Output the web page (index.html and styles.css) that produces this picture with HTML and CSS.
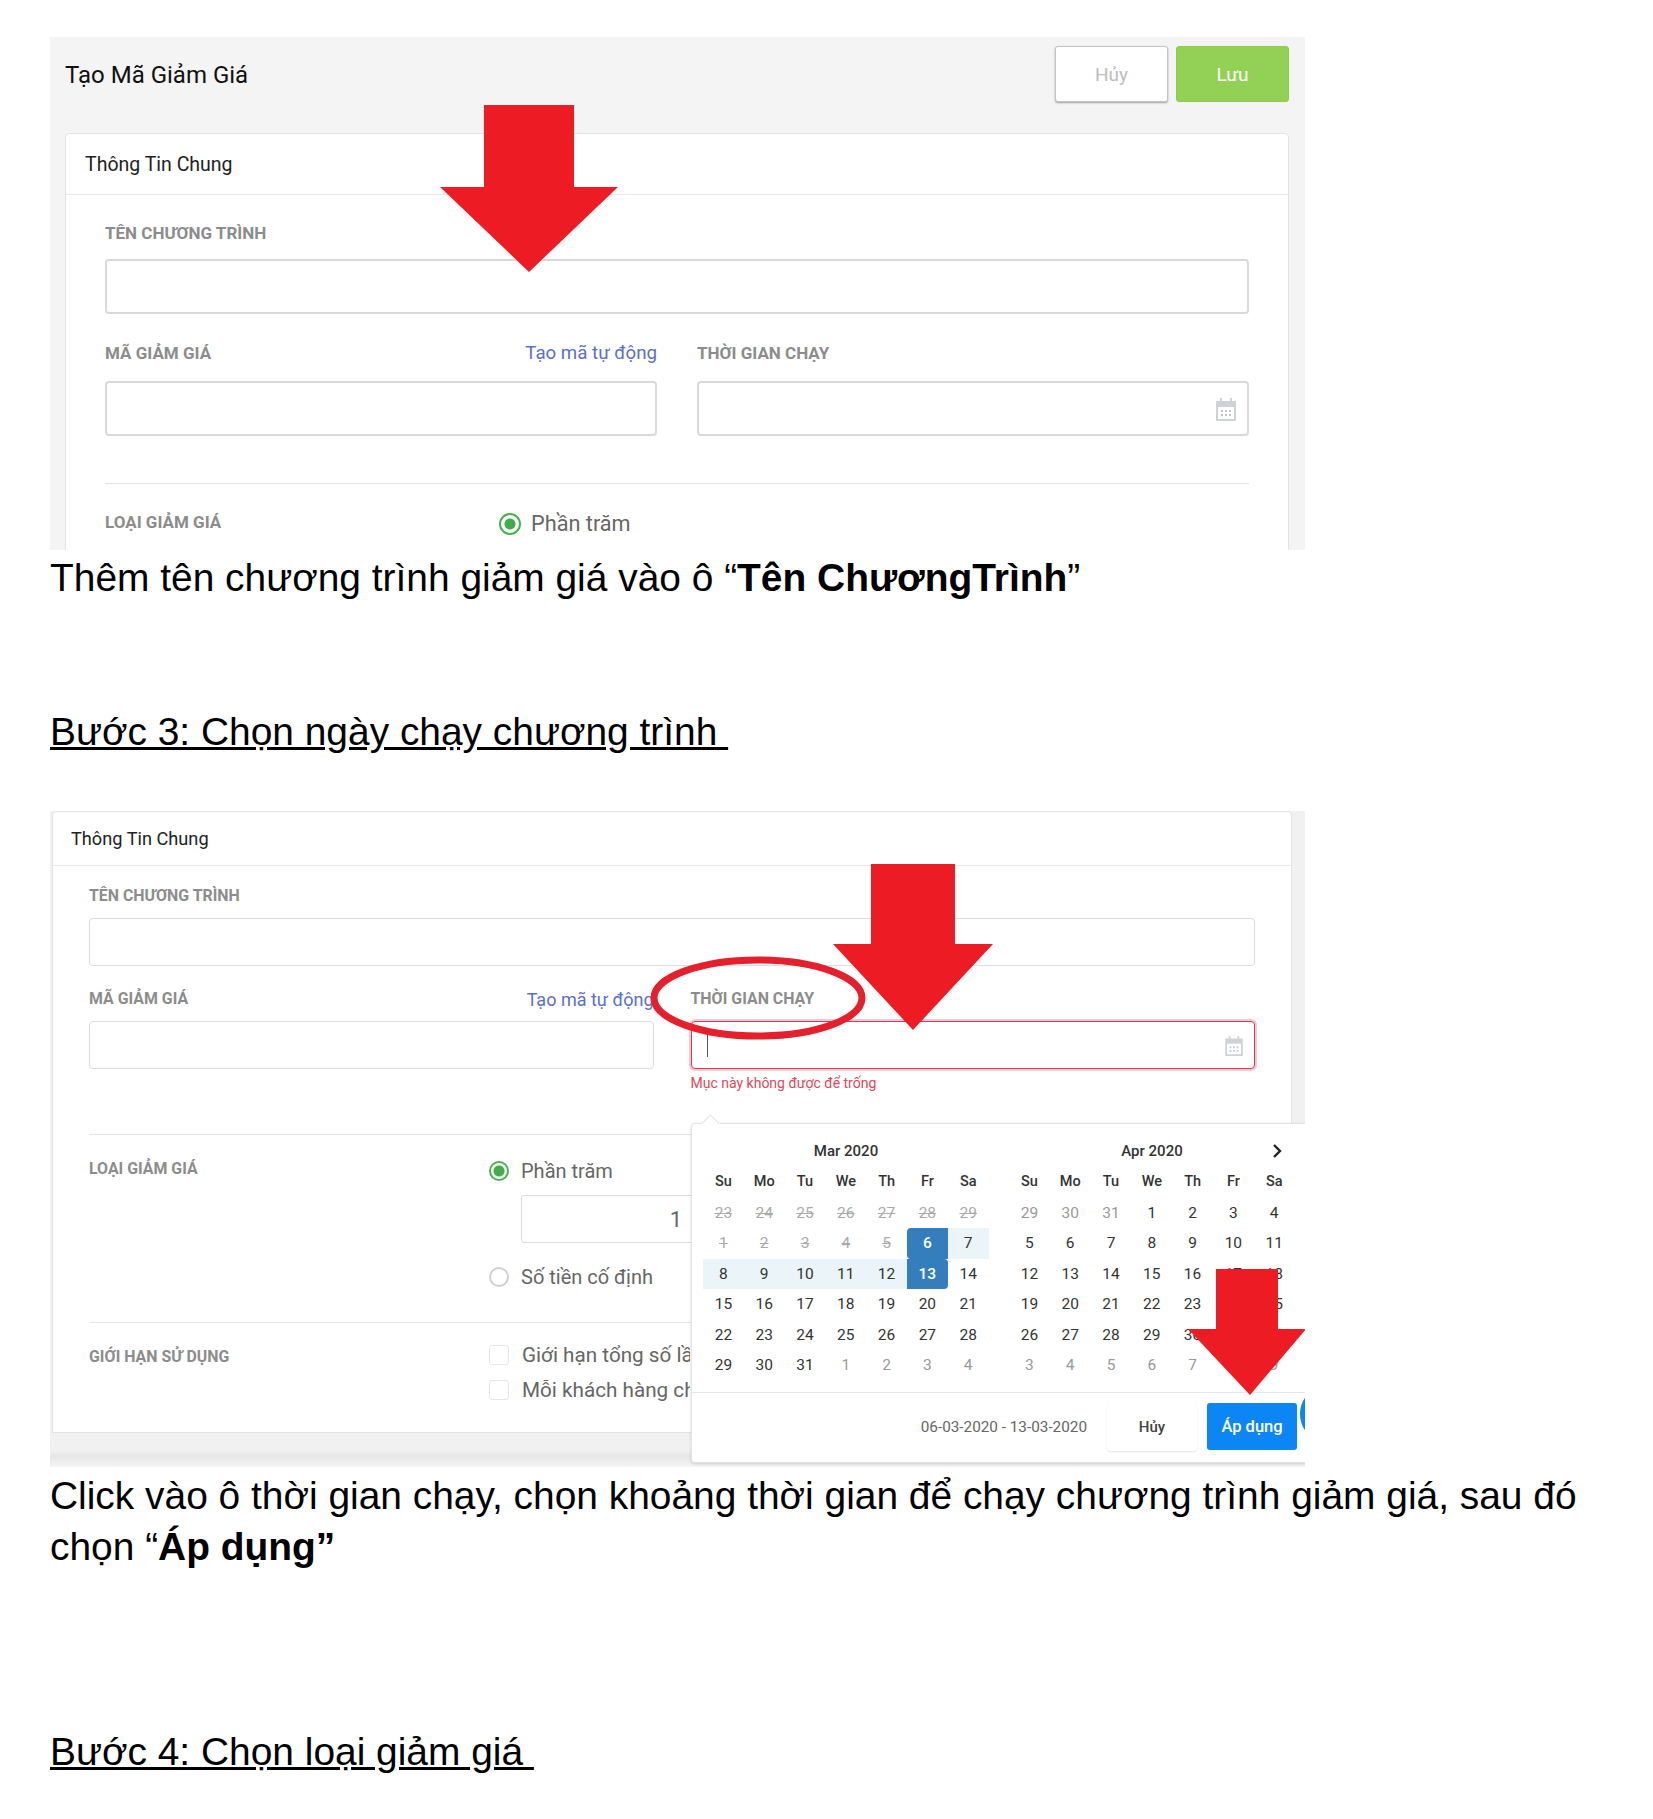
FILE: index.html
```html
<!DOCTYPE html>
<html lang="vi">
<head>
    <meta charset="UTF-8">
    <title>Tạo Mã Giảm Giá</title>
    <link rel="stylesheet" href="styles.css">
</head>
<body>
    <div class="shot shot-one">
        <div class="page-head">
            <h1>Tạo Mã Giảm Giá</h1>
            <div class="head-btns">
                <button class="btn-cancel">Hủy</button>
                <button class="btn-save">Lưu</button>
            </div>
        </div>
        <div class="card">
            <div class="card-title">Thông Tin Chung</div>
            <div class="card-body">
                <div class="lbl">TÊN CHƯƠNG TRÌNH</div>
                <div class="field"></div>
                <div class="two-col">
                    <div>
                        <div class="lbl-row">
                            <div class="lbl">MÃ GIẢM GIÁ</div>
                            <a class="auto-link">Tạo mã tự động</a>
                        </div>
                        <div class="field"></div>
                    </div>
                    <div>
                        <div class="lbl-row">
                            <div class="lbl">THỜI GIAN CHẠY</div>
                        </div>
                        <div class="field field-date">
                            <svg class="cal-icon" width="20" height="24" viewBox="0 0 20 24"><path d="M1 5h18v18H1z" fill="none" stroke="#cfd3d8" stroke-width="2"/><path d="M1 5h18v5H1z" fill="#cfd3d8"/><path d="M5 1v5M15 1v5" stroke="#cfd3d8" stroke-width="2"/><path d="M5 13h2v2H5zM9 13h2v2H9zM13 13h2v2h-2zM5 17h2v2H5zM9 17h2v2H9zM13 17h2v2h-2z" fill="#bfc4ca"/></svg>
                        </div>
                    </div>
                </div>
                <hr class="sep">
                <div class="type-row">
                    <div class="lbl">LOẠI GIẢM GIÁ</div>
                    <div class="radio-item"><span class="radio radio-on"></span>Phần trăm</div>
                </div>
            </div>
        </div>
        <svg class="arrow arrow-one" viewBox="0 0 178 167"><path d="M44 0h90v82h44L89 167 0 82h44z" fill="#ed1c24"/></svg>
    </div>

    <p class="doc-text">Thêm tên chương trình giảm giá vào ô “<b>Tên ChươngTrình</b>”</p>
    <h2 class="doc-step step-three">Bước 3: Chọn ngày chạy chương trình </h2>

    <div class="shot shot-two">
        <div class="card card-two">
            <div class="card-title">Thông Tin Chung</div>
            <div class="card-body">
                <div class="lbl">TÊN CHƯƠNG TRÌNH</div>
                <div class="field"></div>
                <div class="two-col">
                    <div>
                        <div class="lbl-row">
                            <div class="lbl">MÃ GIẢM GIÁ</div>
                            <a class="auto-link">Tạo mã tự động</a>
                        </div>
                        <div class="field"></div>
                    </div>
                    <div>
                        <div class="lbl-row">
                            <div class="lbl">THỜI GIAN CHẠY</div>
                        </div>
                        <div class="field field-date field-error">
                            <span class="caret"></span>
                            <svg class="cal-icon" width="18" height="21" viewBox="0 0 20 24"><path d="M1 5h18v18H1z" fill="none" stroke="#cfd3d8" stroke-width="2"/><path d="M1 5h18v5H1z" fill="#cfd3d8"/><path d="M5 1v5M15 1v5" stroke="#cfd3d8" stroke-width="2"/><path d="M5 13h2v2H5zM9 13h2v2H9zM13 13h2v2h-2zM5 17h2v2H5zM9 17h2v2H9zM13 17h2v2h-2z" fill="#bfc4ca"/></svg>
                        </div>
                        <div class="err-msg">Mục này không được để trống</div>
                    </div>
                </div>
                <hr class="sep sep-two">
                <div class="type-grid">
                    <div class="lbl">LOẠI GIẢM GIÁ</div>
                    <div class="type-opts">
                        <div class="radio-item"><span class="radio radio-on"></span>Phần trăm</div>
                        <div class="num-input">1</div>
                        <div class="radio-item"><span class="radio"></span>Số tiền cố định</div>
                    </div>
                </div>
                <hr class="sep sep-three">
                <div class="type-grid">
                    <div class="lbl">GIỚI HẠN SỬ DỤNG</div>
                    <div class="type-opts limit-opts">
                        <div class="check-item"><span class="check"></span>Giới hạn tổng số lần sử dụng</div>
                        <div class="check-item"><span class="check"></span>Mỗi khách hàng chỉ được dùng</div>
                    </div>
                </div>
            </div>
        </div>

        <div class="picker">
            <div class="months">
                <div class="month">
                    <div class="month-name">Mar 2020</div>
                    <div class="cal" id="cal-mar"></div>
                </div>
                <div class="month">
                    <div class="month-name">Apr 2020</div>
                    <div class="cal" id="cal-apr"></div>
                </div>
            </div>
            <div class="picker-foot">
                <span class="range">06-03-2020 - 13-03-2020</span>
                <button class="pick-cancel">Hủy</button>
                <button class="pick-apply">Áp dụng</button>
            </div>
        </div>
        <svg class="next-icon" width="10" height="14" viewBox="0 0 10 14"><path d="M2 1l6 6-6 6" fill="none" stroke="#222" stroke-width="2.400"/></svg>

        <svg class="ring" viewBox="0 0 216 84"><ellipse cx="108" cy="42" rx="104" ry="38" fill="none" stroke="#e3202b" stroke-width="7"/></svg>
        <svg class="arrow arrow-two" viewBox="0 0 160 166"><path d="M38 0h84v80h38l-80 86L0 80h38z" fill="#ed1c24"/></svg>
        <svg class="arrow arrow-three" viewBox="0 0 118 126"><path d="M28 0h62v60h28l-56 66L0 60h28z" fill="#ed1c24"/></svg>
        <span class="chat-dot"></span>
    </div>

    <p class="doc-text text-two">Click vào ô thời gian chạy, chọn khoảng thời gian để chạy chương trình giảm giá, sau đó chọn “<b>Áp dụng”</b></p>
    <h2 class="doc-step step-four">Bước 4: Chọn loại giảm giá </h2>

    <script src="calendar.js"></script>
</body>
</html>
```

FILE: styles.css
```css
body {
    font-family: "Liberation Sans", Arial, sans-serif;
    background-color: #fff;
    color: #000;
    margin: 0;
    padding: 37px 50px 0;
}

/* screenshots pasted in the doc */
.shot {
    position: relative;
    width: 1255px;
    overflow: hidden;
    font-family: Roboto, sans-serif;
}

.shot-one {
    height: 513px;
    background-color: #f4f4f4;
}

.page-head {
    display: flex;
    justify-content: space-between;
    align-items: center;
    padding: 9px 16px 0 15px;
    height: 56px;
}

.page-head h1 {
    margin: 2px 0 0;
    font-size: 24px;
    font-weight: 400;
    color: #111;
}

.head-btns {
    display: flex;
    gap: 8px;
}

.head-btns button {
    width: 113px;
    height: 56px;
    font-family: Roboto, sans-serif;
    font-size: 19px;
    border-radius: 3px;
}

.btn-cancel {
    background-color: #fff;
    border: 1px solid #c4c4c4;
    color: #bdbdbd;
    box-shadow: 0 1px 2px rgba(0, 0, 0, 0.35);
}

.btn-save {
    background-color: #92d155;
    border: 1px solid #8ccb4b;
    color: #fff;
}

.card {
    background-color: #fff;
    border: 1px solid #e3e3e3;
    border-radius: 4px 4px 0 0;
    margin: 31px 16px 0 15px;
    height: 500px;
}

.card-title {
    height: 60px;
    display: flex;
    align-items: center;
    padding-left: 19px;
    font-size: 19.500px;
    color: #222;
    border-bottom: 1px solid #e8e8e8;
}

.card-body {
    padding: 28px 39px 0;
}

.lbl {
    font-size: 17px;
    line-height: 20px;
    font-weight: 700;
    color: #8c8c8c;
}

.field {
    height: 51px;
    margin-top: 16px;
    background-color: #fff;
    border: 2px solid #d9d9d9;
    border-radius: 4px;
}

.two-col {
    display: grid;
    grid-template-columns: 1fr 1fr;
    gap: 40px;
    margin-top: 27px;
}

.lbl-row {
    display: flex;
    justify-content: space-between;
    align-items: center;
    height: 24px;
    white-space: nowrap;
}

.auto-link {
    font-size: 18.700px;
    color: #5b6fc9;
}

.field-date {
    position: relative;
    display: flex;
    align-items: center;
    justify-content: flex-end;
    padding-right: 11px;
}

.sep {
    border: 0;
    border-top: 1px solid #e5e5e5;
    margin: 47px 0 0;
}

.type-row {
    display: flex;
    align-items: center;
    margin-top: 27px;
}

.type-row .lbl {
    width: 394px;
    margin-bottom: 3px;
}

.radio-item {
    display: flex;
    align-items: center;
    font-size: 21.700px;
    color: #666;
}

.radio {
    width: 18px;
    height: 18px;
    border: 2px solid #d0d0d0;
    border-radius: 50%;
    margin-right: 10px;
    flex-shrink: 0;
    background-color: #fff;
}

.radio-on {
    border-color: #4caf50;
    background: radial-gradient(circle, #3fae4a 0 5px, #fff 6px);
}

.arrow {
    position: absolute;
}

.arrow-one {
    left: 390px;
    top: 68px;
    width: 178px;
    height: 167px;
}

/* doc text */
.doc-text {
    margin: 0;
    font-size: 38.900px;
    line-height: 52px;
    padding-top: 2px;
}

.doc-step {
    margin: 0;
    font-size: 38.900px;
    font-weight: 400;
    line-height: 52px;
    text-decoration: underline;
    white-space: pre-wrap;
}

.step-three {
    margin-top: 102px;
}

/* second shot */
.shot-two {
    height: 656px;
    margin-top: 53px;
    background-color: #f1f1f1;
    background-image: linear-gradient(#f1f1f1 calc(100% - 16px), #e6e6e6 calc(100% - 11px), #f5f5f5 100%);
}

.card-two {
    margin: 0 13px 0 2px;
    height: 620px;
}

.card-two .card-title {
    height: 53px;
    font-size: 18.200px;
    padding-left: 18px;
}

.card-two .card-body {
    padding: 21px 36px 0;
}

.card-two .lbl {
    font-size: 15.900px;
    line-height: 18px;
}

.card-two .field {
    height: 46px;
    margin-top: 13px;
    border-width: 1px;
    border-color: #dcdcdc;
}

.card-two .two-col {
    margin-top: 23px;
    gap: 37px;
}

.card-two .lbl-row {
    height: 20px;
}

.card-two .field {
    margin-top: 13px;
}

.card-two .two-col .field {
    margin-top: 12px;
}

.card-two .auto-link {
    font-size: 18px;
}

.card-two .field-error {
    border: 1px solid #d9385a;
    box-shadow: 0 0 0 2px #f9c9cf;
}

.caret {
    position: absolute;
    left: 15px;
    top: 11px;
    width: 1px;
    height: 24px;
    background-color: #555;
}

.err-msg {
    font-size: 14px;
    line-height: 16px;
    color: #e0475a;
    margin-top: 6px;
}

.sep-two {
    margin-top: 43px;
}

.sep-three {
    margin-top: 34px;
}

.type-grid {
    display: flex;
    margin-top: 25px;
}

.type-grid .lbl {
    width: 400px;
    flex-shrink: 0;
}

.type-opts {
    display: flex;
    flex-direction: column;
    white-space: nowrap;
}

.shot-two .radio-item {
    font-size: 20px;
    height: 22px;
}

.shot-two .radio {
    width: 16px;
    height: 16px;
    margin-right: 12px;
}

.num-input {
    box-sizing: border-box;
    width: 178px;
    height: 48px;
    margin: 13px 0 23px 32px;
    background-color: #fff;
    border: 1px solid #dcdcdc;
    border-radius: 3px;
    font-size: 22px;
    color: #666;
    text-align: right;
    line-height: 48px;
    padding-right: 16px;
}

/* long options run under the popup, the reference cuts them there */
.limit-opts {
    row-gap: 11px;
    margin-top: -5px;
    width: 201px;
    overflow: hidden;
}

.check-item {
    display: flex;
    align-items: center;
    font-size: 20.700px;
    color: #666;
    height: 24px;
}

.check {
    width: 18px;
    height: 18px;
    border: 1px solid #e6e6e6;
    border-radius: 3px;
    margin-right: 13px;
    flex-shrink: 0;
}

/* date range popup */
.picker {
    position: absolute;
    left: 641px;
    top: 312px;
    width: 640px;
    height: 338px;
    background-color: #fff;
    border: 1px solid #e4e4e4;
    border-radius: 4px;
    box-shadow: 0 1px 3px rgba(0, 0, 0, 0.15);
}

.picker::before {
    content: "";
    position: absolute;
    left: 12px;
    top: -7px;
    width: 12px;
    height: 12px;
    background-color: #fff;
    border-left: 1px solid #e4e4e4;
    border-top: 1px solid #e4e4e4;
    transform: rotate(45deg);
}

.months {
    display: flex;
    gap: 20px;
    padding: 18px 0 0 11px;
}

.month {
    width: 286px;
}

.month-name {
    text-align: center;
    font-size: 15px;
    line-height: 18px;
    font-weight: 500;
    color: #333;
    margin-bottom: 7px;
}

.cal {
    display: grid;
    grid-template-columns: repeat(7, 40.800px);
    grid-auto-rows: 30.500px;
    font-size: 15.500px;
    text-align: center;
    line-height: 30px;
    color: #333;
}

.cal .dow {
    font-size: 14.500px;
    font-weight: 500;
}

.cal .old {
    color: #999;
}

.cal .off {
    color: #aaa;
    text-decoration: line-through;
}

.cal .in-range {
    background-color: #ebf4f8;
}

.cal .active {
    background-color: #357ebd;
    color: #fff;
    font-weight: 500;
}

.cal .active.start {
    border-radius: 4px 0 0 4px;
}

.cal .active.end {
    border-radius: 0 4px 4px 0;
}

.picker-foot {
    position: absolute;
    left: 0;
    right: 0;
    bottom: 0;
    height: 70px;
    border-top: 1px solid #e6e6e6;
    display: flex;
    align-items: center;
    justify-content: flex-end;
    padding-bottom: 2px;
    box-sizing: border-box;
}

.range {
    font-size: 15.300px;
    color: #666;
    margin-right: 20px;
}

.pick-cancel {
    width: 90px;
    height: 48px;
    background-color: #fff;
    border: 0;
    border-radius: 4px;
    font-family: Roboto, sans-serif;
    font-size: 15px;
    font-weight: 500;
    color: #444;
    box-shadow: 0 1px 2px rgba(0, 0, 0, 0.1);
}

.pick-apply {
    width: 90px;
    height: 47px;
    margin: 0 35px 0 10px;
    background-color: #0d86f5;
    border: 0;
    border-radius: 3px;
    font-family: Roboto, sans-serif;
    font-size: 16.500px;
    font-weight: 500;
    color: #fff;
}

.next-icon {
    position: absolute;
    left: 1222px;
    top: 333px;
}

.ring {
    position: absolute;
    left: 600px;
    top: 145px;
    width: 216px;
    height: 84px;
}

.arrow-two {
    left: 783px;
    top: 53px;
    width: 160px;
    height: 166px;
}

.arrow-three {
    left: 1138px;
    top: 458px;
    width: 118px;
    height: 126px;
}

.chat-dot {
    position: absolute;
    left: 1250px;
    top: 580px;
    width: 34px;
    height: 46px;
    border-radius: 50%;
    background-color: #0d86f5;
}

.text-two {
    padding-top: 3px;
    line-height: 51px;
}

.step-four {
    margin-top: 154px;
}
```

FILE: calendar.js
```js
// fills the two month grids of the date picker
var DOW = ["Su", "Mo", "Tu", "We", "Th", "Fr", "Sa"];

function addCell(box, text, cls) {
    var el = document.createElement("div");
    el.textContent = text;
    if (cls) el.className = cls;
    box.appendChild(el);
}

function fillMonth(id, days, classFor) {
    var box = document.getElementById(id);
    DOW.forEach(function (d) { addCell(box, d, "dow"); });
    days.forEach(function (d, i) { addCell(box, d, classFor(i, d)); });
}

var mar = [23,24,25,26,27,28,29,1,2,3,4,5,6,7,8,9,10,11,12,13,14,15,16,17,18,19,20,21,22,23,24,25,26,27,28,29,30,31,1,2,3,4];
var apr = [29,30,31,1,2,3,4,5,6,7,8,9,10,11,12,13,14,15,16,17,18,19,20,21,22,23,24,25,26,27,28,29,30,1,2,3,4,5,6,7,8,9];

fillMonth("cal-mar", mar, function (i) {
    if (i < 12) return "off";
    if (i == 12) return "active start";
    if (i == 19) return "active end";
    if (i > 12 && i < 19) return "in-range";
    if (i >= 38) return "old";
    return "";
});

fillMonth("cal-apr", apr, function (i) {
    if (i < 3 || i >= 33) return "old";
    return "";
});
```
